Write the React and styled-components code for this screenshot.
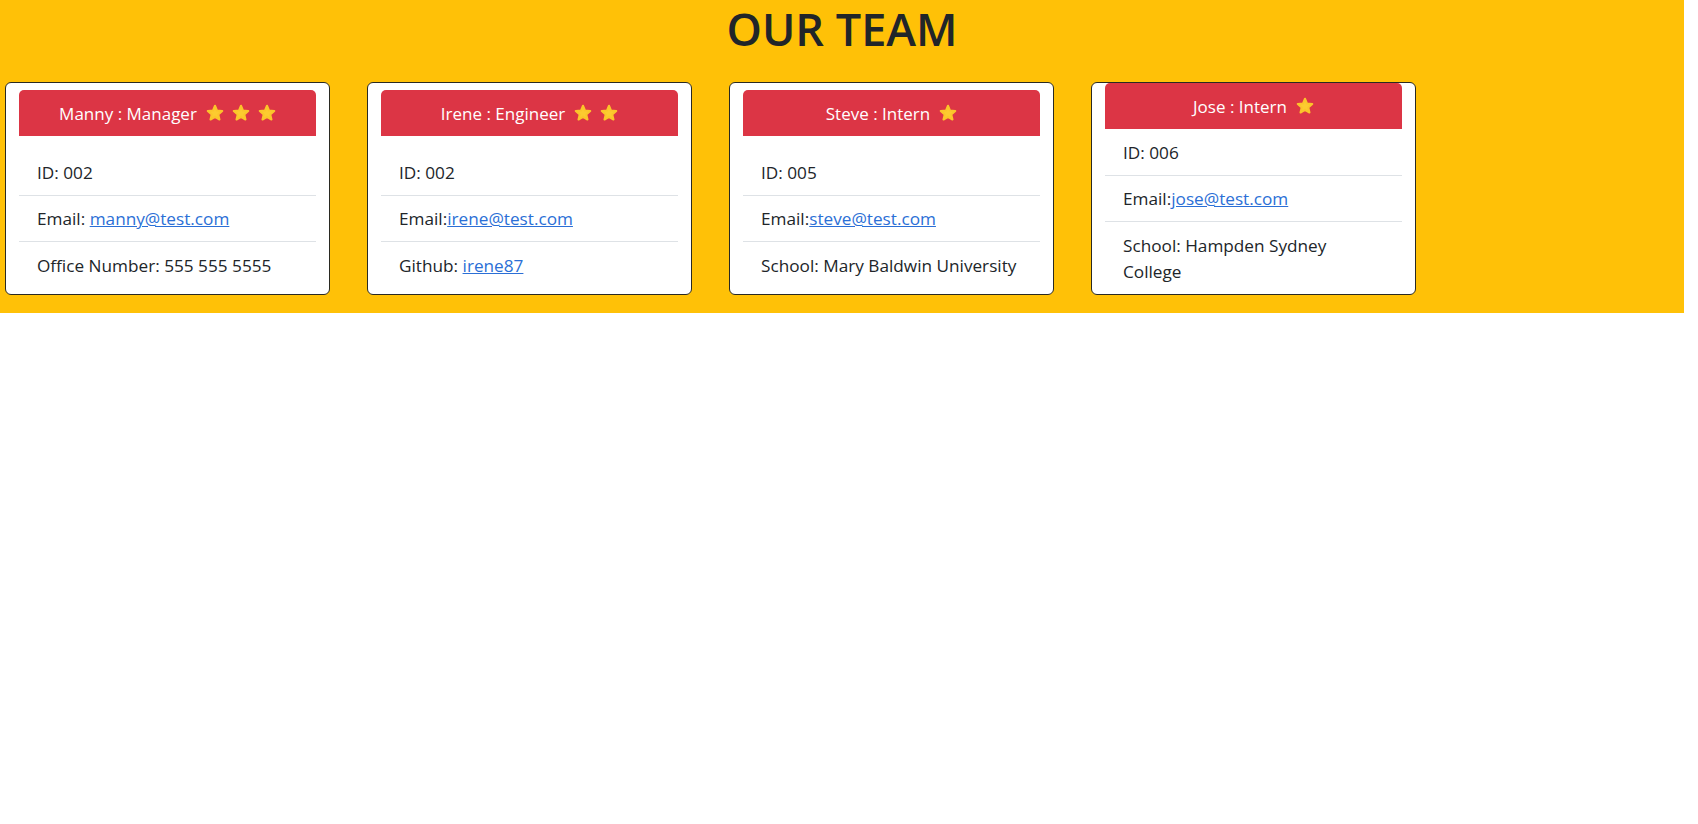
import React from 'react';
import styled, { createGlobalStyle } from 'styled-components';

const Global = createGlobalStyle`
  html, body { margin: 0; padding: 0; background: #ffffff; }
  body {
    font-family: "Open Sans", "Noto Sans", "Liberation Sans", sans-serif;
    color: #212529;
  }
  * { box-sizing: border-box; }
`;

const Band = styled.header`
  background: #ffc107;
  margin-right: 14px;
  padding: 0 0 18px 0;
`;

const Title = styled.h1`
  margin: 0;
  height: 82px;
  padding-top: 1px;
  text-align: center;
  font-size: 45px;
  line-height: 56px;
  font-weight: 600;
  color: #212529;
`;

const CardRow = styled.div`
  display: flex;
  align-items: stretch;
  gap: 37px;
  padding-left: 5px;
`;

const Card = styled.section`
  width: 325px;
  background: #ffffff;
  border: 1px solid #2a2a22;
  border-radius: 6px;
  display: flex;
  flex-direction: column;
  padding: ${(p) => (p.$flush ? '0 13px' : '7px 13px 4px')};
`;

const CardHeader = styled.div`
  height: 46px;
  background: #dc3545;
  color: #ffffff;
  border-radius: 5px 5px 0 0;
  display: flex;
  align-items: center;
  justify-content: center;
  gap: 9px;
  font-size: 17px;
`;

const Stars = styled.span`
  display: inline-flex;
  gap: 8px;
  align-items: center;
  margin-top: -1px;
`;

const List = styled.ul`
  list-style: none;
  margin: ${(p) => (p.$flush ? '0' : '13px 0 0')};
  padding: 0;
`;

const Item = styled.li`
  padding: 10.5px 18px 9px;
  font-size: 17.2px;
  line-height: 26px;
  color: #212529;
  & + & { border-top: 1px solid #dee2e6; }
`;

const Link = styled.a`
  color: #2b6fd6;
  text-decoration: underline;
`;

const Star = () => (
  <svg width="18" height="18" viewBox="-1 -1 26 26" aria-hidden="true">
    <polygon
      points="12,1.5 14.94,8.45 22.46,9.1 16.76,14.05 18.47,21.4 12,17.5 5.53,21.4 7.24,14.05 1.54,9.1 9.06,8.45"
      fill="#fccb30"
      stroke="#fbc52a"
      strokeWidth="3"
      strokeLinejoin="round"
    />
  </svg>
);

const team = [
  {
    name: 'Manny',
    role: 'Manager',
    stars: 3,
    id: '002',
    emailLabel: 'Email: ',
    email: 'manny@test.com',
    extra: <>Office Number: 555 555 5555</>,
  },
  {
    name: 'Irene',
    role: 'Engineer',
    stars: 2,
    id: '002',
    emailLabel: 'Email:',
    email: 'irene@test.com',
    extra: (
      <>
        Github: <Link href="#">irene87</Link>
      </>
    ),
  },
  {
    name: 'Steve',
    role: 'Intern',
    stars: 1,
    id: '005',
    emailLabel: 'Email:',
    email: 'steve@test.com',
    extra: <>School: Mary Baldwin University</>,
  },
  {
    name: 'Jose',
    role: 'Intern',
    stars: 1,
    id: '006',
    emailLabel: 'Email:',
    email: 'jose@test.com',
    extra: <>School: Hampden Sydney College</>,
    flush: true,
  },
];

export default function App() {
  return (
    <>
      <Global />
      <Band>
        <Title>OUR TEAM</Title>
        <CardRow>
          {team.map((m) => (
            <Card key={m.name} $flush={m.flush}>
              <CardHeader>
                <span>
                  {m.name} : {m.role}
                </span>
                <Stars>
                  {Array.from({ length: m.stars }).map((_, i) => (
                    <Star key={i} />
                  ))}
                </Stars>
              </CardHeader>
              <List $flush={m.flush}>
                <Item>ID: {m.id}</Item>
                <Item>
                  {m.emailLabel}
                  <Link href="#">{m.email}</Link>
                </Item>
                <Item>{m.extra}</Item>
              </List>
            </Card>
          ))}
        </CardRow>
      </Band>
    </>
  );
}
